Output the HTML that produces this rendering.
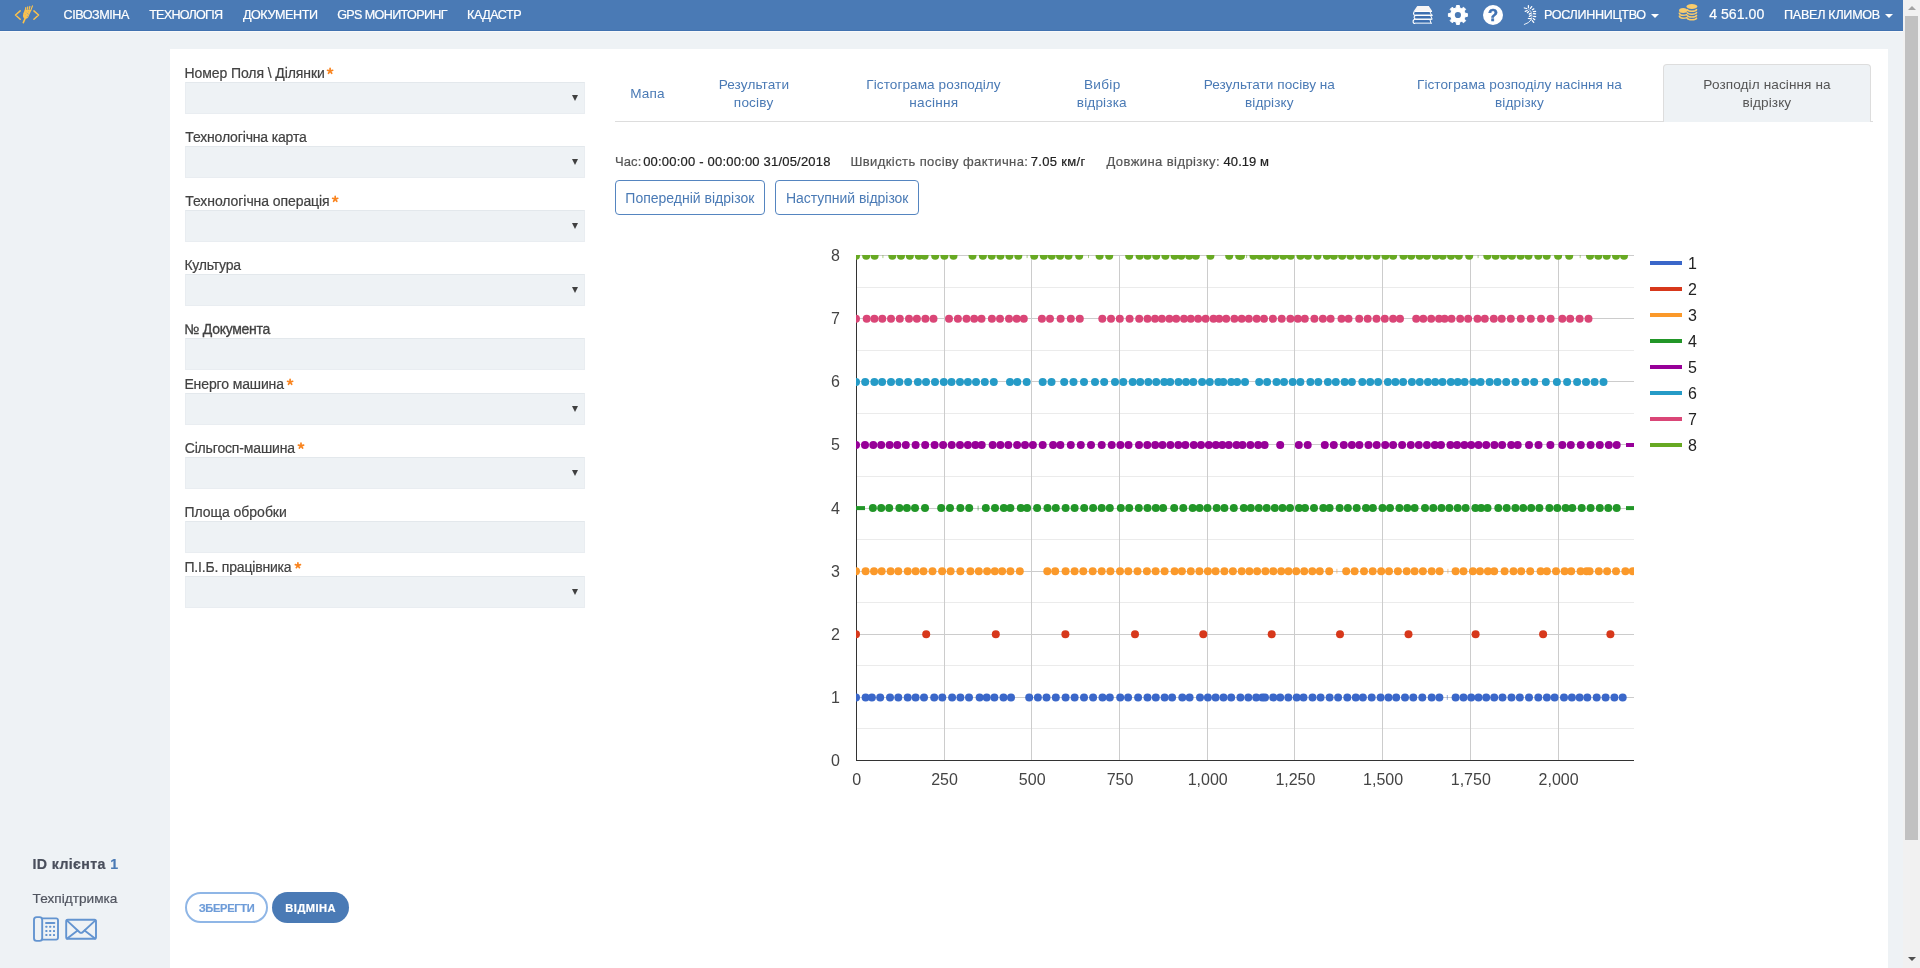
<!DOCTYPE html>
<html lang="uk">
<head>
<meta charset="utf-8">
<title>Розподіл насіння на відрізку</title>
<style>
*{box-sizing:border-box;}
html,body{margin:0;padding:0;width:1920px;height:968px;overflow:hidden;}
body{background:#eef2f5;font-family:"Liberation Sans",sans-serif;color:#333;position:relative;}
#root{position:absolute;left:0;top:0;width:1920px;height:968px;will-change:transform;}
.tx{position:absolute;white-space:pre;margin:0;padding:0;-webkit-text-stroke:0.2px;}
.ab{position:absolute;}
#nav{position:absolute;left:0;top:0;width:1903px;height:32px;background:#4a7ab5;border-bottom:1px solid #f8f9fa;box-shadow:inset 0 -1px 0 #4172b0;}
#sb{position:absolute;left:1903px;top:0;width:17px;height:968px;background:#f1f1f1;}
#sb .th{position:absolute;left:2px;top:16px;width:13px;height:824px;background:#c1c1c1;}
#sb .au{position:absolute;left:4.5px;top:5.5px;border-left:4px solid transparent;border-right:4px solid transparent;border-bottom:4.5px solid #a3a3a3;}
#sb .ad{position:absolute;left:4.5px;top:956.5px;border-left:4px solid transparent;border-right:4px solid transparent;border-top:4.5px solid #505050;}
#panel{position:absolute;left:170px;top:49px;width:1718px;height:919px;background:#fff;}
.fld{position:absolute;left:185px;width:400px;height:32px;background:#eef2f5;border:1px solid #e9edf1;border-top-color:#e3e8ec;}
.fld.sel:after{content:"";position:absolute;right:6px;top:11.7px;border-left:3px solid transparent;border-right:3px solid transparent;border-top:6px solid #404040;}
#tabline{position:absolute;left:615px;top:121px;width:1258px;height:1px;background:#ddd;}
#tabact{position:absolute;left:1663px;top:64px;width:208px;height:58px;background:#eef2f5;border:1px solid #ddd;border-bottom:none;border-radius:4px 4px 0 0;}
.btn{position:absolute;top:180px;height:35px;border:1px solid #5585c0;border-radius:4px;background:#fff;}
.caret{position:absolute;top:14px;width:0;height:0;border-left:4px solid transparent;border-right:4px solid transparent;border-top:4px solid #fff;}

</style>
</head>
<body>
<div id="root">
<div id="nav"></div>
<svg class="ab" style="left:0;top:0" width="1903" height="30" viewBox="0 0 1903 30">
<g fill="none" stroke="#fbc24d" stroke-width="1.5" stroke-linecap="round" stroke-linejoin="round">
<path d="M20.2 10.9L15.5 15L20.2 19.2M33.9 10.9L38.6 15L33.9 19.2"/>
<path d="M23.3 22.6L25.6 17.4" stroke-width="1.6"/>
<path d="M25.2 10.6L25.9 7.2M27 10.4L27.9 6.5M28.9 10.4L30 6M30.7 10.6L32.6 5.5" stroke-width="1.15" stroke-linecap="butt"/>
</g>
<path d="M24.7 10L23.3 13.4Q22.3 16.2 23.7 18.3Q26.4 19.6 28.3 17.2L30.7 11.8L31.3 10Z" fill="#fbc24d"/>
<g fill="#7f9ab5"><circle cx="27.6" cy="13.6" r=".5"/><circle cx="28.6" cy="14.8" r=".45"/><circle cx="27.3" cy="16.2" r=".5"/><circle cx="25.2" cy="14.8" r=".4"/><circle cx="26.1" cy="12.2" r=".4"/><circle cx="28.6" cy="11.8" r=".4"/></g>
<!-- books -->
<path d="M1417.3 5.9H1428.8L1432.3 11.3H1413.6Z" fill="#f7f5f5"/>
<g fill="none" stroke="#fff" stroke-width="1.1" stroke-linejoin="round">
<path d="M1432 11.5H1415.4a1.9 1.9 0 0 0 0 3.8H1432.6"/>
<path d="M1432.4 15.4H1416a1.9 1.9 0 0 0 0 3.8H1432.4"/>
<path d="M1431.6 19.3H1415.2a2.1 2.1 0 0 0 0 4.2H1431.8"/>
</g>
<path d="M1414.8 22.6H1431.8V23.9H1415.3Z" fill="#b7cbe3"/>
<g fill="#3a6db0"><rect x="1415.2" y="12.3" width="14.6" height="1.5"/><rect x="1416.2" y="16.4" width="14.6" height="1.5"/><rect x="1414.9" y="20.4" width="14.8" height="1.5"/></g>
<path d="M1430 11.8L1431.6 15.2M1430.8 15.9L1432 19M1430 19.8L1431 23.4" stroke="#fff" stroke-width="1" fill="none"/>
<!-- gear -->
<path d="M1456.21 7.79 L1456.47 5.51 L1459.33 5.51 L1459.59 7.79 L1461.80 8.71 L1463.60 7.27 L1465.63 9.30 L1464.19 11.10 L1465.11 13.31 L1467.39 13.57 L1467.39 16.43 L1465.11 16.69 L1464.19 18.90 L1465.63 20.70 L1463.60 22.73 L1461.80 21.29 L1459.59 22.21 L1459.33 24.49 L1456.47 24.49 L1456.21 22.21 L1454.00 21.29 L1452.20 22.73 L1450.17 20.70 L1451.61 18.90 L1450.69 16.69 L1448.41 16.43 L1448.41 13.57 L1450.69 13.31 L1451.61 11.10 L1450.17 9.30 L1452.20 7.27 L1454.00 8.71Z" fill="#fff" stroke="#fff" stroke-width="1" stroke-linejoin="round"/>
<circle cx="1457.9" cy="15" r="3.1" fill="#4a7ab5"/>
<!-- help -->
<circle cx="1493" cy="15" r="10" fill="#fff"/>
<text x="1493" y="20.7" text-anchor="middle" font-family="Liberation Sans, sans-serif" font-weight="700" font-size="16.5" fill="#3f72b3" stroke="#3f72b3" stroke-width=".5">?</text>
<!-- plant -->
<path d="M1524.3 24.5Q1529 23.2 1531.15 19.85" stroke="#fff" stroke-opacity=".92" stroke-width=".95" fill="none" stroke-linecap="round"/>
<path d="M1531.15 19.85Q1532.6 16.5 1531.6 12.9Q1530.8 10.2 1528.6 9.3" stroke="#fff" stroke-opacity=".8" stroke-width=".8" fill="none" stroke-linecap="round"/>
<path d="M1528.43 5.50L1528.43 7.70M1530.40 8.40L1531.70 6.60M1524.30 8.00L1526.70 8.50M1532.30 9.80L1533.80 8.90M1525.20 11.30L1527.20 10.50M1527.40 12.70L1528.70 11.60M1533.40 11.65L1535.60 11.45M1529.30 14.10L1530.50 13.40M1533.60 13.67L1535.60 13.77M1529.40 16.35L1530.90 15.50M1533.70 16.40L1535.70 16.56M1528.40 18.50L1530.70 18.60M1533.20 18.55L1534.80 19.70M1532.30 20.60L1533.70 22.45" stroke="#fff" stroke-width="1.25" fill="none" stroke-linecap="round"/>
<!-- coins -->
<g fill="#f9cc6c"><ellipse cx="1683.1" cy="10.5" rx="4.1" ry="2.5"/><ellipse cx="1691.9" cy="6.5" rx="5.4" ry="2.5"/></g>
<g fill="none" stroke="#f9cc6c" stroke-width="1.5" stroke-linecap="round">
<path d="M1679.3 13.2Q1680 15.2 1683 15.3Q1685.5 15.3 1686.6 14.6M1679.3 16.1Q1680 18.2 1683 18.3Q1685.5 18.3 1686.8 17.6"/>
<path d="M1687.2 9.6Q1688 11.2 1691.9 11.3Q1695.8 11.2 1696.6 9.6M1687.2 12.5Q1688 14.1 1691.9 14.2Q1695.8 14.1 1696.6 12.5M1687.2 15.3Q1688 16.9 1691.9 17Q1695.8 16.9 1696.6 15.3M1687.2 18.1Q1688 19.7 1691.9 19.8Q1695.8 19.7 1696.6 18.1"/>
</g>
</svg>
<div class="caret" style="left:1651px"></div>
<div class="caret" style="left:1885px"></div>
<div id="sb"><div class="au"></div><div class="th"></div><div class="ad"></div></div>
<div id="panel"></div>
<div class="fld sel" style="top:82px"></div>
<div class="fld sel" style="top:146px"></div>
<div class="fld sel" style="top:210px"></div>
<div class="fld sel" style="top:274px"></div>
<div class="fld" style="top:338px"></div>
<div class="fld sel" style="top:393px"></div>
<div class="fld sel" style="top:457px"></div>
<div class="fld" style="top:521px"></div>
<div class="fld sel" style="top:576px"></div>
<svg class="ab" style="left:280px;top:60px" width="70" height="520" viewBox="280 60 70 520"><path d="M330.1 71.1L330.10 68.40M330.1 71.1L332.67 70.27M330.1 71.1L331.69 73.28M330.1 71.1L328.51 73.28M330.1 71.1L327.53 70.27M335.2 199.1L335.20 196.40M335.2 199.1L337.77 198.27M335.2 199.1L336.79 201.28M335.2 199.1L333.61 201.28M335.2 199.1L332.63 198.27M290.1 382.1L290.10 379.40M290.1 382.1L292.67 381.27M290.1 382.1L291.69 384.28M290.1 382.1L288.51 384.28M290.1 382.1L287.53 381.27M301.0 445.9L301.00 443.20M301.0 445.9L303.57 445.07M301.0 445.9L302.59 448.08M301.0 445.9L299.41 448.08M301.0 445.9L298.43 445.07M297.9 565.5L297.90 562.80M297.9 565.5L300.47 564.67M297.9 565.5L299.49 567.68M297.9 565.5L296.31 567.68M297.9 565.5L295.33 564.67" fill="none" stroke="#f9841f" stroke-width="1.7" stroke-linecap="round"/></svg>
<div id="tabline"></div>
<div id="tabact"></div>
<div class="btn" style="left:615px;width:150px"></div>
<div class="btn" style="left:775px;width:144px"></div>
<svg id="chart" width="1110" height="560" viewBox="615 240 1110 560" style="position:absolute;left:615px;top:240px;font-family:'Liberation Sans',sans-serif">
<defs><clipPath id="cp"><rect x="856" y="255" width="778" height="506"/></clipPath></defs>
<rect x="856" y="728" width="778" height="1" fill="#ebebeb"/>
<rect x="856" y="665" width="778" height="1" fill="#ebebeb"/>
<rect x="856" y="602" width="778" height="1" fill="#ebebeb"/>
<rect x="856" y="539" width="778" height="1" fill="#ebebeb"/>
<rect x="856" y="476" width="778" height="1" fill="#ebebeb"/>
<rect x="856" y="413" width="778" height="1" fill="#ebebeb"/>
<rect x="856" y="350" width="778" height="1" fill="#ebebeb"/>
<rect x="856" y="287" width="778" height="1" fill="#ebebeb"/>
<rect x="944" y="255" width="1" height="506" fill="#ccc"/>
<rect x="1031" y="255" width="1" height="506" fill="#ccc"/>
<rect x="1119" y="255" width="1" height="506" fill="#ccc"/>
<rect x="1207" y="255" width="1" height="506" fill="#ccc"/>
<rect x="1294" y="255" width="1" height="506" fill="#ccc"/>
<rect x="1382" y="255" width="1" height="506" fill="#ccc"/>
<rect x="1470" y="255" width="1" height="506" fill="#ccc"/>
<rect x="1558" y="255" width="1" height="506" fill="#ccc"/>
<rect x="856" y="697" width="778" height="1" fill="#ccc"/>
<rect x="856" y="634" width="778" height="1" fill="#ccc"/>
<rect x="856" y="571" width="778" height="1" fill="#ccc"/>
<rect x="856" y="508" width="778" height="1" fill="#ccc"/>
<rect x="856" y="444" width="778" height="1" fill="#ccc"/>
<rect x="856" y="381" width="778" height="1" fill="#ccc"/>
<rect x="856" y="318" width="778" height="1" fill="#ccc"/>
<rect x="856" y="255" width="778" height="1" fill="#ccc"/>
<rect x="856" y="255" width="1" height="506" fill="#333"/>
<rect x="856" y="760" width="778" height="1" fill="#333"/>
<g clip-path="url(#cp)">
<g fill="#3a67c9" stroke="none">
<rect x="1446.8" y="695.0" width="1" height="4.8" opacity="0.55"/>
<circle cx="856.0" cy="697.4" r="4"/><circle cx="865.6" cy="697.4" r="4"/><circle cx="871.9" cy="697.4" r="4"/><circle cx="880.2" cy="697.4" r="4"/><circle cx="890.0" cy="697.4" r="4"/><circle cx="898.3" cy="697.4" r="4"/><circle cx="907.7" cy="697.4" r="4"/><circle cx="915.6" cy="697.4" r="4"/><circle cx="924.0" cy="697.4" r="4"/><circle cx="934.2" cy="697.4" r="4"/><circle cx="942.3" cy="697.4" r="4"/><circle cx="952.1" cy="697.4" r="4"/><circle cx="960.4" cy="697.4" r="4"/><circle cx="969.0" cy="697.4" r="4"/><circle cx="979.6" cy="697.4" r="4"/><circle cx="986.7" cy="697.4" r="4"/><circle cx="994.4" cy="697.4" r="4"/><circle cx="1003.5" cy="697.4" r="4"/><circle cx="1011.0" cy="697.4" r="4"/><circle cx="1029.2" cy="697.4" r="4"/><circle cx="1037.9" cy="697.4" r="4"/><circle cx="1046.5" cy="697.4" r="4"/><circle cx="1055.8" cy="697.4" r="4"/><circle cx="1065.6" cy="697.4" r="4"/><circle cx="1074.6" cy="697.4" r="4"/><circle cx="1084.0" cy="697.4" r="4"/><circle cx="1093.1" cy="697.4" r="4"/><circle cx="1102.5" cy="697.4" r="4"/><circle cx="1109.8" cy="697.4" r="4"/><circle cx="1120.2" cy="697.4" r="4"/><circle cx="1128.1" cy="697.4" r="4"/><circle cx="1138.1" cy="697.4" r="4"/><circle cx="1147.5" cy="697.4" r="4"/><circle cx="1155.8" cy="697.4" r="4"/><circle cx="1164.6" cy="697.4" r="4"/><circle cx="1172.1" cy="697.4" r="4"/><circle cx="1182.3" cy="697.4" r="4"/><circle cx="1189.6" cy="697.4" r="4"/><circle cx="1200.0" cy="697.4" r="4"/><circle cx="1207.9" cy="697.4" r="4"/><circle cx="1215.6" cy="697.4" r="4"/><circle cx="1223.5" cy="697.4" r="4"/><circle cx="1231.2" cy="697.4" r="4"/><circle cx="1240.4" cy="697.4" r="4"/><circle cx="1248.3" cy="697.4" r="4"/><circle cx="1256.2" cy="697.4" r="4"/><circle cx="1262.3" cy="697.4" r="4"/><circle cx="1265.0" cy="697.4" r="4"/><circle cx="1273.3" cy="697.4" r="4"/><circle cx="1280.2" cy="697.4" r="4"/><circle cx="1288.3" cy="697.4" r="4"/><circle cx="1296.7" cy="697.4" r="4"/><circle cx="1303.5" cy="697.4" r="4"/><circle cx="1312.5" cy="697.4" r="4"/><circle cx="1320.6" cy="697.4" r="4"/><circle cx="1329.6" cy="697.4" r="4"/><circle cx="1338.1" cy="697.4" r="4"/><circle cx="1347.3" cy="697.4" r="4"/><circle cx="1355.8" cy="697.4" r="4"/><circle cx="1362.9" cy="697.4" r="4"/><circle cx="1371.7" cy="697.4" r="4"/><circle cx="1380.6" cy="697.4" r="4"/><circle cx="1388.5" cy="697.4" r="4"/><circle cx="1396.2" cy="697.4" r="4"/><circle cx="1405.0" cy="697.4" r="4"/><circle cx="1413.3" cy="697.4" r="4"/><circle cx="1422.3" cy="697.4" r="4"/><circle cx="1431.7" cy="697.4" r="4"/><circle cx="1439.4" cy="697.4" r="4"/><circle cx="1455.6" cy="697.4" r="4"/><circle cx="1463.5" cy="697.4" r="4"/><circle cx="1471.2" cy="697.4" r="4"/><circle cx="1478.5" cy="697.4" r="4"/><circle cx="1486.2" cy="697.4" r="4"/><circle cx="1494.2" cy="697.4" r="4"/><circle cx="1502.5" cy="697.4" r="4"/><circle cx="1511.5" cy="697.4" r="4"/><circle cx="1519.8" cy="697.4" r="4"/><circle cx="1529.0" cy="697.4" r="4"/><circle cx="1538.3" cy="697.4" r="4"/><circle cx="1546.9" cy="697.4" r="4"/><circle cx="1554.6" cy="697.4" r="4"/><circle cx="1564.0" cy="697.4" r="4"/><circle cx="1571.9" cy="697.4" r="4"/><circle cx="1579.6" cy="697.4" r="4"/><circle cx="1587.3" cy="697.4" r="4"/><circle cx="1596.7" cy="697.4" r="4"/><circle cx="1605.6" cy="697.4" r="4"/><circle cx="1614.4" cy="697.4" r="4"/><circle cx="1622.7" cy="697.4" r="4"/>
</g>
<g fill="#d7381b" stroke="none">
<circle cx="856.0" cy="634.3" r="4"/><circle cx="926.2" cy="634.3" r="4"/><circle cx="995.8" cy="634.3" r="4"/><circle cx="1065.4" cy="634.3" r="4"/><circle cx="1135.0" cy="634.3" r="4"/><circle cx="1203.3" cy="634.3" r="4"/><circle cx="1271.7" cy="634.3" r="4"/><circle cx="1340.0" cy="634.3" r="4"/><circle cx="1408.5" cy="634.3" r="4"/><circle cx="1475.6" cy="634.3" r="4"/><circle cx="1543.1" cy="634.3" r="4"/><circle cx="1610.4" cy="634.3" r="4"/>
</g>
<g fill="#fb992a" stroke="none">
<rect x="1336.4" y="568.8" width="1" height="4.8" opacity="0.55"/>
<rect x="1447.4" y="568.8" width="1" height="4.8" opacity="0.55"/>
<circle cx="856.0" cy="571.2" r="4"/><circle cx="865.6" cy="571.2" r="4"/><circle cx="874.0" cy="571.2" r="4"/><circle cx="881.7" cy="571.2" r="4"/><circle cx="890.6" cy="571.2" r="4"/><circle cx="898.3" cy="571.2" r="4"/><circle cx="907.7" cy="571.2" r="4"/><circle cx="915.6" cy="571.2" r="4"/><circle cx="923.5" cy="571.2" r="4"/><circle cx="932.5" cy="571.2" r="4"/><circle cx="942.1" cy="571.2" r="4"/><circle cx="950.6" cy="571.2" r="4"/><circle cx="960.4" cy="571.2" r="4"/><circle cx="970.4" cy="571.2" r="4"/><circle cx="978.8" cy="571.2" r="4"/><circle cx="987.1" cy="571.2" r="4"/><circle cx="994.8" cy="571.2" r="4"/><circle cx="1002.1" cy="571.2" r="4"/><circle cx="1010.4" cy="571.2" r="4"/><circle cx="1019.8" cy="571.2" r="4"/><circle cx="1047.3" cy="571.2" r="4"/><circle cx="1055.2" cy="571.2" r="4"/><circle cx="1065.6" cy="571.2" r="4"/><circle cx="1074.6" cy="571.2" r="4"/><circle cx="1083.3" cy="571.2" r="4"/><circle cx="1092.7" cy="571.2" r="4"/><circle cx="1101.7" cy="571.2" r="4"/><circle cx="1110.4" cy="571.2" r="4"/><circle cx="1120.0" cy="571.2" r="4"/><circle cx="1128.3" cy="571.2" r="4"/><circle cx="1137.5" cy="571.2" r="4"/><circle cx="1146.9" cy="571.2" r="4"/><circle cx="1155.6" cy="571.2" r="4"/><circle cx="1164.6" cy="571.2" r="4"/><circle cx="1174.6" cy="571.2" r="4"/><circle cx="1181.9" cy="571.2" r="4"/><circle cx="1190.8" cy="571.2" r="4"/><circle cx="1199.4" cy="571.2" r="4"/><circle cx="1207.9" cy="571.2" r="4"/><circle cx="1215.6" cy="571.2" r="4"/><circle cx="1224.4" cy="571.2" r="4"/><circle cx="1232.9" cy="571.2" r="4"/><circle cx="1241.7" cy="571.2" r="4"/><circle cx="1249.4" cy="571.2" r="4"/><circle cx="1257.1" cy="571.2" r="4"/><circle cx="1265.4" cy="571.2" r="4"/><circle cx="1273.3" cy="571.2" r="4"/><circle cx="1281.2" cy="571.2" r="4"/><circle cx="1288.5" cy="571.2" r="4"/><circle cx="1296.2" cy="571.2" r="4"/><circle cx="1304.2" cy="571.2" r="4"/><circle cx="1312.3" cy="571.2" r="4"/><circle cx="1319.8" cy="571.2" r="4"/><circle cx="1329.2" cy="571.2" r="4"/><circle cx="1346.2" cy="571.2" r="4"/><circle cx="1354.6" cy="571.2" r="4"/><circle cx="1364.0" cy="571.2" r="4"/><circle cx="1372.7" cy="571.2" r="4"/><circle cx="1381.2" cy="571.2" r="4"/><circle cx="1389.0" cy="571.2" r="4"/><circle cx="1397.9" cy="571.2" r="4"/><circle cx="1406.7" cy="571.2" r="4"/><circle cx="1414.6" cy="571.2" r="4"/><circle cx="1422.9" cy="571.2" r="4"/><circle cx="1431.7" cy="571.2" r="4"/><circle cx="1439.6" cy="571.2" r="4"/><circle cx="1455.6" cy="571.2" r="4"/><circle cx="1463.5" cy="571.2" r="4"/><circle cx="1472.9" cy="571.2" r="4"/><circle cx="1480.0" cy="571.2" r="4"/><circle cx="1487.9" cy="571.2" r="4"/><circle cx="1494.2" cy="571.2" r="4"/><circle cx="1504.6" cy="571.2" r="4"/><circle cx="1513.5" cy="571.2" r="4"/><circle cx="1521.2" cy="571.2" r="4"/><circle cx="1530.2" cy="571.2" r="4"/><circle cx="1540.6" cy="571.2" r="4"/><circle cx="1546.9" cy="571.2" r="4"/><circle cx="1556.0" cy="571.2" r="4"/><circle cx="1564.6" cy="571.2" r="4"/><circle cx="1571.2" cy="571.2" r="4"/><circle cx="1580.6" cy="571.2" r="4"/><circle cx="1586.5" cy="571.2" r="4"/><circle cx="1589.6" cy="571.2" r="4"/><circle cx="1598.8" cy="571.2" r="4"/><circle cx="1607.1" cy="571.2" r="4"/><circle cx="1616.0" cy="571.2" r="4"/><circle cx="1625.4" cy="571.2" r="4"/><circle cx="1632.7" cy="571.2" r="4"/>
</g>
<g fill="#229628" stroke="none">
<rect x="856" y="506.1" width="9" height="4"/>
<rect x="1626" y="506.1" width="8" height="4"/>
<rect x="977.6" y="505.7" width="1" height="4.8" opacity="0.55"/>
<circle cx="872.9" cy="508.1" r="4"/><circle cx="881.2" cy="508.1" r="4"/><circle cx="889.2" cy="508.1" r="4"/><circle cx="899.4" cy="508.1" r="4"/><circle cx="906.9" cy="508.1" r="4"/><circle cx="915.0" cy="508.1" r="4"/><circle cx="925.0" cy="508.1" r="4"/><circle cx="941.2" cy="508.1" r="4"/><circle cx="950.0" cy="508.1" r="4"/><circle cx="960.4" cy="508.1" r="4"/><circle cx="969.2" cy="508.1" r="4"/><circle cx="985.8" cy="508.1" r="4"/><circle cx="995.0" cy="508.1" r="4"/><circle cx="1003.8" cy="508.1" r="4"/><circle cx="1010.4" cy="508.1" r="4"/><circle cx="1020.8" cy="508.1" r="4"/><circle cx="1027.1" cy="508.1" r="4"/><circle cx="1037.1" cy="508.1" r="4"/><circle cx="1047.5" cy="508.1" r="4"/><circle cx="1055.8" cy="508.1" r="4"/><circle cx="1065.6" cy="508.1" r="4"/><circle cx="1074.6" cy="508.1" r="4"/><circle cx="1084.2" cy="508.1" r="4"/><circle cx="1093.1" cy="508.1" r="4"/><circle cx="1101.7" cy="508.1" r="4"/><circle cx="1109.8" cy="508.1" r="4"/><circle cx="1120.8" cy="508.1" r="4"/><circle cx="1129.2" cy="508.1" r="4"/><circle cx="1138.8" cy="508.1" r="4"/><circle cx="1147.5" cy="508.1" r="4"/><circle cx="1155.8" cy="508.1" r="4"/><circle cx="1163.1" cy="508.1" r="4"/><circle cx="1174.2" cy="508.1" r="4"/><circle cx="1183.3" cy="508.1" r="4"/><circle cx="1192.7" cy="508.1" r="4"/><circle cx="1199.6" cy="508.1" r="4"/><circle cx="1207.5" cy="508.1" r="4"/><circle cx="1216.7" cy="508.1" r="4"/><circle cx="1224.4" cy="508.1" r="4"/><circle cx="1233.8" cy="508.1" r="4"/><circle cx="1243.8" cy="508.1" r="4"/><circle cx="1250.8" cy="508.1" r="4"/><circle cx="1258.8" cy="508.1" r="4"/><circle cx="1266.7" cy="508.1" r="4"/><circle cx="1274.8" cy="508.1" r="4"/><circle cx="1282.5" cy="508.1" r="4"/><circle cx="1290.0" cy="508.1" r="4"/><circle cx="1299.0" cy="508.1" r="4"/><circle cx="1305.0" cy="508.1" r="4"/><circle cx="1314.0" cy="508.1" r="4"/><circle cx="1323.3" cy="508.1" r="4"/><circle cx="1329.6" cy="508.1" r="4"/><circle cx="1339.6" cy="508.1" r="4"/><circle cx="1347.9" cy="508.1" r="4"/><circle cx="1356.7" cy="508.1" r="4"/><circle cx="1366.0" cy="508.1" r="4"/><circle cx="1372.9" cy="508.1" r="4"/><circle cx="1382.5" cy="508.1" r="4"/><circle cx="1390.0" cy="508.1" r="4"/><circle cx="1399.4" cy="508.1" r="4"/><circle cx="1407.3" cy="508.1" r="4"/><circle cx="1414.6" cy="508.1" r="4"/><circle cx="1425.0" cy="508.1" r="4"/><circle cx="1433.3" cy="508.1" r="4"/><circle cx="1441.5" cy="508.1" r="4"/><circle cx="1449.4" cy="508.1" r="4"/><circle cx="1457.7" cy="508.1" r="4"/><circle cx="1465.6" cy="508.1" r="4"/><circle cx="1475.4" cy="508.1" r="4"/><circle cx="1481.2" cy="508.1" r="4"/><circle cx="1487.5" cy="508.1" r="4"/><circle cx="1498.3" cy="508.1" r="4"/><circle cx="1506.7" cy="508.1" r="4"/><circle cx="1515.4" cy="508.1" r="4"/><circle cx="1523.3" cy="508.1" r="4"/><circle cx="1531.2" cy="508.1" r="4"/><circle cx="1539.4" cy="508.1" r="4"/><circle cx="1549.4" cy="508.1" r="4"/><circle cx="1557.3" cy="508.1" r="4"/><circle cx="1565.6" cy="508.1" r="4"/><circle cx="1572.3" cy="508.1" r="4"/><circle cx="1581.7" cy="508.1" r="4"/><circle cx="1590.6" cy="508.1" r="4"/><circle cx="1599.8" cy="508.1" r="4"/><circle cx="1608.3" cy="508.1" r="4"/><circle cx="1616.7" cy="508.1" r="4"/>
</g>
<g fill="#970098" stroke="none">
<rect x="1626" y="443.0" width="8" height="4"/>
<circle cx="856.0" cy="445.0" r="4"/><circle cx="865.0" cy="445.0" r="4"/><circle cx="873.3" cy="445.0" r="4"/><circle cx="881.2" cy="445.0" r="4"/><circle cx="889.6" cy="445.0" r="4"/><circle cx="897.3" cy="445.0" r="4"/><circle cx="905.8" cy="445.0" r="4"/><circle cx="915.6" cy="445.0" r="4"/><circle cx="925.2" cy="445.0" r="4"/><circle cx="934.6" cy="445.0" r="4"/><circle cx="943.1" cy="445.0" r="4"/><circle cx="951.7" cy="445.0" r="4"/><circle cx="960.0" cy="445.0" r="4"/><circle cx="967.9" cy="445.0" r="4"/><circle cx="975.4" cy="445.0" r="4"/><circle cx="981.7" cy="445.0" r="4"/><circle cx="992.7" cy="445.0" r="4"/><circle cx="1000.4" cy="445.0" r="4"/><circle cx="1008.3" cy="445.0" r="4"/><circle cx="1017.1" cy="445.0" r="4"/><circle cx="1025.0" cy="445.0" r="4"/><circle cx="1032.9" cy="445.0" r="4"/><circle cx="1042.7" cy="445.0" r="4"/><circle cx="1053.1" cy="445.0" r="4"/><circle cx="1060.4" cy="445.0" r="4"/><circle cx="1070.8" cy="445.0" r="4"/><circle cx="1080.8" cy="445.0" r="4"/><circle cx="1091.0" cy="445.0" r="4"/><circle cx="1101.7" cy="445.0" r="4"/><circle cx="1111.7" cy="445.0" r="4"/><circle cx="1120.4" cy="445.0" r="4"/><circle cx="1128.5" cy="445.0" r="4"/><circle cx="1139.0" cy="445.0" r="4"/><circle cx="1147.3" cy="445.0" r="4"/><circle cx="1155.2" cy="445.0" r="4"/><circle cx="1162.5" cy="445.0" r="4"/><circle cx="1170.4" cy="445.0" r="4"/><circle cx="1178.3" cy="445.0" r="4"/><circle cx="1185.4" cy="445.0" r="4"/><circle cx="1193.8" cy="445.0" r="4"/><circle cx="1201.0" cy="445.0" r="4"/><circle cx="1208.8" cy="445.0" r="4"/><circle cx="1215.8" cy="445.0" r="4"/><circle cx="1222.3" cy="445.0" r="4"/><circle cx="1228.8" cy="445.0" r="4"/><circle cx="1236.5" cy="445.0" r="4"/><circle cx="1242.5" cy="445.0" r="4"/><circle cx="1250.4" cy="445.0" r="4"/><circle cx="1258.1" cy="445.0" r="4"/><circle cx="1264.6" cy="445.0" r="4"/><circle cx="1280.2" cy="445.0" r="4"/><circle cx="1298.8" cy="445.0" r="4"/><circle cx="1307.7" cy="445.0" r="4"/><circle cx="1324.8" cy="445.0" r="4"/><circle cx="1333.8" cy="445.0" r="4"/><circle cx="1343.8" cy="445.0" r="4"/><circle cx="1351.9" cy="445.0" r="4"/><circle cx="1359.4" cy="445.0" r="4"/><circle cx="1368.5" cy="445.0" r="4"/><circle cx="1376.7" cy="445.0" r="4"/><circle cx="1385.2" cy="445.0" r="4"/><circle cx="1393.1" cy="445.0" r="4"/><circle cx="1402.1" cy="445.0" r="4"/><circle cx="1410.8" cy="445.0" r="4"/><circle cx="1418.8" cy="445.0" r="4"/><circle cx="1426.9" cy="445.0" r="4"/><circle cx="1434.8" cy="445.0" r="4"/><circle cx="1441.0" cy="445.0" r="4"/><circle cx="1450.4" cy="445.0" r="4"/><circle cx="1457.1" cy="445.0" r="4"/><circle cx="1464.4" cy="445.0" r="4"/><circle cx="1471.2" cy="445.0" r="4"/><circle cx="1478.5" cy="445.0" r="4"/><circle cx="1486.2" cy="445.0" r="4"/><circle cx="1494.4" cy="445.0" r="4"/><circle cx="1502.1" cy="445.0" r="4"/><circle cx="1511.2" cy="445.0" r="4"/><circle cx="1517.7" cy="445.0" r="4"/><circle cx="1529.0" cy="445.0" r="4"/><circle cx="1538.5" cy="445.0" r="4"/><circle cx="1550.4" cy="445.0" r="4"/><circle cx="1562.3" cy="445.0" r="4"/><circle cx="1570.8" cy="445.0" r="4"/><circle cx="1580.8" cy="445.0" r="4"/><circle cx="1590.6" cy="445.0" r="4"/><circle cx="1599.8" cy="445.0" r="4"/><circle cx="1608.8" cy="445.0" r="4"/><circle cx="1616.7" cy="445.0" r="4"/>
</g>
<g fill="#259bc7" stroke="none">
<circle cx="856.0" cy="381.9" r="4"/><circle cx="865.2" cy="381.9" r="4"/><circle cx="874.4" cy="381.9" r="4"/><circle cx="882.1" cy="381.9" r="4"/><circle cx="891.0" cy="381.9" r="4"/><circle cx="899.4" cy="381.9" r="4"/><circle cx="908.1" cy="381.9" r="4"/><circle cx="917.9" cy="381.9" r="4"/><circle cx="926.0" cy="381.9" r="4"/><circle cx="935.0" cy="381.9" r="4"/><circle cx="943.8" cy="381.9" r="4"/><circle cx="951.5" cy="381.9" r="4"/><circle cx="960.0" cy="381.9" r="4"/><circle cx="967.9" cy="381.9" r="4"/><circle cx="976.0" cy="381.9" r="4"/><circle cx="984.8" cy="381.9" r="4"/><circle cx="993.8" cy="381.9" r="4"/><circle cx="1010.0" cy="381.9" r="4"/><circle cx="1017.3" cy="381.9" r="4"/><circle cx="1026.7" cy="381.9" r="4"/><circle cx="1042.7" cy="381.9" r="4"/><circle cx="1051.5" cy="381.9" r="4"/><circle cx="1064.2" cy="381.9" r="4"/><circle cx="1073.5" cy="381.9" r="4"/><circle cx="1084.0" cy="381.9" r="4"/><circle cx="1095.0" cy="381.9" r="4"/><circle cx="1104.2" cy="381.9" r="4"/><circle cx="1115.0" cy="381.9" r="4"/><circle cx="1123.3" cy="381.9" r="4"/><circle cx="1132.7" cy="381.9" r="4"/><circle cx="1140.2" cy="381.9" r="4"/><circle cx="1148.3" cy="381.9" r="4"/><circle cx="1156.2" cy="381.9" r="4"/><circle cx="1164.2" cy="381.9" r="4"/><circle cx="1170.2" cy="381.9" r="4"/><circle cx="1178.5" cy="381.9" r="4"/><circle cx="1186.0" cy="381.9" r="4"/><circle cx="1193.3" cy="381.9" r="4"/><circle cx="1202.1" cy="381.9" r="4"/><circle cx="1209.8" cy="381.9" r="4"/><circle cx="1218.3" cy="381.9" r="4"/><circle cx="1223.3" cy="381.9" r="4"/><circle cx="1231.2" cy="381.9" r="4"/><circle cx="1237.1" cy="381.9" r="4"/><circle cx="1245.0" cy="381.9" r="4"/><circle cx="1259.2" cy="381.9" r="4"/><circle cx="1267.1" cy="381.9" r="4"/><circle cx="1276.5" cy="381.9" r="4"/><circle cx="1284.0" cy="381.9" r="4"/><circle cx="1292.7" cy="381.9" r="4"/><circle cx="1300.4" cy="381.9" r="4"/><circle cx="1310.4" cy="381.9" r="4"/><circle cx="1318.3" cy="381.9" r="4"/><circle cx="1327.9" cy="381.9" r="4"/><circle cx="1335.8" cy="381.9" r="4"/><circle cx="1344.6" cy="381.9" r="4"/><circle cx="1351.9" cy="381.9" r="4"/><circle cx="1362.3" cy="381.9" r="4"/><circle cx="1370.2" cy="381.9" r="4"/><circle cx="1378.1" cy="381.9" r="4"/><circle cx="1387.9" cy="381.9" r="4"/><circle cx="1395.4" cy="381.9" r="4"/><circle cx="1403.1" cy="381.9" r="4"/><circle cx="1411.9" cy="381.9" r="4"/><circle cx="1419.8" cy="381.9" r="4"/><circle cx="1427.9" cy="381.9" r="4"/><circle cx="1435.2" cy="381.9" r="4"/><circle cx="1442.5" cy="381.9" r="4"/><circle cx="1450.8" cy="381.9" r="4"/><circle cx="1457.7" cy="381.9" r="4"/><circle cx="1464.6" cy="381.9" r="4"/><circle cx="1473.3" cy="381.9" r="4"/><circle cx="1480.6" cy="381.9" r="4"/><circle cx="1489.6" cy="381.9" r="4"/><circle cx="1497.5" cy="381.9" r="4"/><circle cx="1506.2" cy="381.9" r="4"/><circle cx="1515.4" cy="381.9" r="4"/><circle cx="1525.4" cy="381.9" r="4"/><circle cx="1534.2" cy="381.9" r="4"/><circle cx="1545.8" cy="381.9" r="4"/><circle cx="1556.9" cy="381.9" r="4"/><circle cx="1567.1" cy="381.9" r="4"/><circle cx="1577.1" cy="381.9" r="4"/><circle cx="1586.0" cy="381.9" r="4"/><circle cx="1594.6" cy="381.9" r="4"/><circle cx="1603.5" cy="381.9" r="4"/>
</g>
<g fill="#da4677" stroke="none">
<circle cx="856.0" cy="318.8" r="4"/><circle cx="866.7" cy="318.8" r="4"/><circle cx="874.4" cy="318.8" r="4"/><circle cx="882.3" cy="318.8" r="4"/><circle cx="891.0" cy="318.8" r="4"/><circle cx="899.8" cy="318.8" r="4"/><circle cx="909.0" cy="318.8" r="4"/><circle cx="916.9" cy="318.8" r="4"/><circle cx="925.4" cy="318.8" r="4"/><circle cx="933.5" cy="318.8" r="4"/><circle cx="949.0" cy="318.8" r="4"/><circle cx="957.9" cy="318.8" r="4"/><circle cx="966.5" cy="318.8" r="4"/><circle cx="974.2" cy="318.8" r="4"/><circle cx="981.5" cy="318.8" r="4"/><circle cx="991.9" cy="318.8" r="4"/><circle cx="1000.0" cy="318.8" r="4"/><circle cx="1009.0" cy="318.8" r="4"/><circle cx="1016.7" cy="318.8" r="4"/><circle cx="1023.8" cy="318.8" r="4"/><circle cx="1041.9" cy="318.8" r="4"/><circle cx="1050.0" cy="318.8" r="4"/><circle cx="1060.6" cy="318.8" r="4"/><circle cx="1070.8" cy="318.8" r="4"/><circle cx="1079.8" cy="318.8" r="4"/><circle cx="1102.3" cy="318.8" r="4"/><circle cx="1111.0" cy="318.8" r="4"/><circle cx="1119.8" cy="318.8" r="4"/><circle cx="1129.6" cy="318.8" r="4"/><circle cx="1139.2" cy="318.8" r="4"/><circle cx="1147.5" cy="318.8" r="4"/><circle cx="1155.0" cy="318.8" r="4"/><circle cx="1161.9" cy="318.8" r="4"/><circle cx="1169.4" cy="318.8" r="4"/><circle cx="1176.2" cy="318.8" r="4"/><circle cx="1184.0" cy="318.8" r="4"/><circle cx="1190.8" cy="318.8" r="4"/><circle cx="1198.1" cy="318.8" r="4"/><circle cx="1205.6" cy="318.8" r="4"/><circle cx="1213.5" cy="318.8" r="4"/><circle cx="1219.2" cy="318.8" r="4"/><circle cx="1226.2" cy="318.8" r="4"/><circle cx="1234.4" cy="318.8" r="4"/><circle cx="1241.7" cy="318.8" r="4"/><circle cx="1248.8" cy="318.8" r="4"/><circle cx="1256.7" cy="318.8" r="4"/><circle cx="1264.0" cy="318.8" r="4"/><circle cx="1272.9" cy="318.8" r="4"/><circle cx="1281.7" cy="318.8" r="4"/><circle cx="1290.4" cy="318.8" r="4"/><circle cx="1297.9" cy="318.8" r="4"/><circle cx="1304.8" cy="318.8" r="4"/><circle cx="1314.4" cy="318.8" r="4"/><circle cx="1322.9" cy="318.8" r="4"/><circle cx="1330.6" cy="318.8" r="4"/><circle cx="1341.5" cy="318.8" r="4"/><circle cx="1348.5" cy="318.8" r="4"/><circle cx="1359.2" cy="318.8" r="4"/><circle cx="1367.7" cy="318.8" r="4"/><circle cx="1376.5" cy="318.8" r="4"/><circle cx="1384.8" cy="318.8" r="4"/><circle cx="1393.1" cy="318.8" r="4"/><circle cx="1400.0" cy="318.8" r="4"/><circle cx="1416.2" cy="318.8" r="4"/><circle cx="1423.3" cy="318.8" r="4"/><circle cx="1431.2" cy="318.8" r="4"/><circle cx="1439.0" cy="318.8" r="4"/><circle cx="1444.6" cy="318.8" r="4"/><circle cx="1451.5" cy="318.8" r="4"/><circle cx="1460.2" cy="318.8" r="4"/><circle cx="1468.1" cy="318.8" r="4"/><circle cx="1477.5" cy="318.8" r="4"/><circle cx="1484.8" cy="318.8" r="4"/><circle cx="1493.8" cy="318.8" r="4"/><circle cx="1501.7" cy="318.8" r="4"/><circle cx="1510.8" cy="318.8" r="4"/><circle cx="1520.8" cy="318.8" r="4"/><circle cx="1530.8" cy="318.8" r="4"/><circle cx="1541.0" cy="318.8" r="4"/><circle cx="1550.6" cy="318.8" r="4"/><circle cx="1562.3" cy="318.8" r="4"/><circle cx="1570.2" cy="318.8" r="4"/><circle cx="1579.6" cy="318.8" r="4"/><circle cx="1588.5" cy="318.8" r="4"/>
</g>
<g fill="#67a922" stroke="none">
<rect x="882.4" y="253.3" width="1" height="4.8" opacity="0.55"/>
<rect x="1026.6" y="253.3" width="1" height="4.8" opacity="0.55"/>
<rect x="1088.0" y="253.3" width="1" height="4.8" opacity="0.55"/>
<rect x="1246.1" y="253.3" width="1" height="4.8" opacity="0.55"/>
<rect x="1477.6" y="253.3" width="1" height="4.8" opacity="0.55"/>
<rect x="1579.7" y="253.3" width="1" height="4.8" opacity="0.55"/>
<circle cx="856.0" cy="255.7" r="4"/><circle cx="866.2" cy="255.7" r="4"/><circle cx="874.6" cy="255.7" r="4"/><circle cx="892.3" cy="255.7" r="4"/><circle cx="901.0" cy="255.7" r="4"/><circle cx="909.8" cy="255.7" r="4"/><circle cx="918.8" cy="255.7" r="4"/><circle cx="924.6" cy="255.7" r="4"/><circle cx="935.2" cy="255.7" r="4"/><circle cx="944.4" cy="255.7" r="4"/><circle cx="953.5" cy="255.7" r="4"/><circle cx="972.5" cy="255.7" r="4"/><circle cx="982.9" cy="255.7" r="4"/><circle cx="991.7" cy="255.7" r="4"/><circle cx="1000.4" cy="255.7" r="4"/><circle cx="1009.4" cy="255.7" r="4"/><circle cx="1018.3" cy="255.7" r="4"/><circle cx="1034.2" cy="255.7" r="4"/><circle cx="1043.8" cy="255.7" r="4"/><circle cx="1051.7" cy="255.7" r="4"/><circle cx="1060.0" cy="255.7" r="4"/><circle cx="1068.5" cy="255.7" r="4"/><circle cx="1079.2" cy="255.7" r="4"/><circle cx="1099.6" cy="255.7" r="4"/><circle cx="1109.2" cy="255.7" r="4"/><circle cx="1129.2" cy="255.7" r="4"/><circle cx="1139.6" cy="255.7" r="4"/><circle cx="1147.5" cy="255.7" r="4"/><circle cx="1156.2" cy="255.7" r="4"/><circle cx="1165.4" cy="255.7" r="4"/><circle cx="1174.6" cy="255.7" r="4"/><circle cx="1181.2" cy="255.7" r="4"/><circle cx="1189.2" cy="255.7" r="4"/><circle cx="1195.8" cy="255.7" r="4"/><circle cx="1210.4" cy="255.7" r="4"/><circle cx="1229.2" cy="255.7" r="4"/><circle cx="1239.2" cy="255.7" r="4"/><circle cx="1241.0" cy="255.7" r="4"/><circle cx="1253.5" cy="255.7" r="4"/><circle cx="1260.2" cy="255.7" r="4"/><circle cx="1267.7" cy="255.7" r="4"/><circle cx="1275.4" cy="255.7" r="4"/><circle cx="1283.3" cy="255.7" r="4"/><circle cx="1290.6" cy="255.7" r="4"/><circle cx="1300.4" cy="255.7" r="4"/><circle cx="1307.9" cy="255.7" r="4"/><circle cx="1317.5" cy="255.7" r="4"/><circle cx="1326.9" cy="255.7" r="4"/><circle cx="1333.8" cy="255.7" r="4"/><circle cx="1342.1" cy="255.7" r="4"/><circle cx="1350.4" cy="255.7" r="4"/><circle cx="1359.2" cy="255.7" r="4"/><circle cx="1367.5" cy="255.7" r="4"/><circle cx="1376.5" cy="255.7" r="4"/><circle cx="1385.4" cy="255.7" r="4"/><circle cx="1393.1" cy="255.7" r="4"/><circle cx="1403.5" cy="255.7" r="4"/><circle cx="1411.2" cy="255.7" r="4"/><circle cx="1419.6" cy="255.7" r="4"/><circle cx="1426.9" cy="255.7" r="4"/><circle cx="1435.8" cy="255.7" r="4"/><circle cx="1442.7" cy="255.7" r="4"/><circle cx="1451.0" cy="255.7" r="4"/><circle cx="1458.8" cy="255.7" r="4"/><circle cx="1469.2" cy="255.7" r="4"/><circle cx="1487.3" cy="255.7" r="4"/><circle cx="1495.6" cy="255.7" r="4"/><circle cx="1504.0" cy="255.7" r="4"/><circle cx="1511.9" cy="255.7" r="4"/><circle cx="1520.6" cy="255.7" r="4"/><circle cx="1528.5" cy="255.7" r="4"/><circle cx="1538.3" cy="255.7" r="4"/><circle cx="1546.7" cy="255.7" r="4"/><circle cx="1558.1" cy="255.7" r="4"/><circle cx="1569.2" cy="255.7" r="4"/><circle cx="1590.0" cy="255.7" r="4"/><circle cx="1598.3" cy="255.7" r="4"/><circle cx="1606.7" cy="255.7" r="4"/><circle cx="1616.0" cy="255.7" r="4"/><circle cx="1624.0" cy="255.7" r="4"/>
</g>
</g>
<g fill="#444" font-size="16" text-anchor="end">
<text x="839.8" y="766">0</text>
<text x="839.8" y="703">1</text>
<text x="839.8" y="640">2</text>
<text x="839.8" y="577">3</text>
<text x="839.8" y="514">4</text>
<text x="839.8" y="450">5</text>
<text x="839.8" y="387">6</text>
<text x="839.8" y="324">7</text>
<text x="839.8" y="261">8</text>
</g>
<g fill="#444" font-size="16" text-anchor="middle">
<text x="856.8" y="784.8">0</text>
<text x="944.5" y="784.8">250</text>
<text x="1032.2" y="784.8">500</text>
<text x="1120.0" y="784.8">750</text>
<text x="1207.7" y="784.8">1,000</text>
<text x="1295.4" y="784.8">1,250</text>
<text x="1383.1" y="784.8">1,500</text>
<text x="1470.8" y="784.8">1,750</text>
<text x="1558.6" y="784.8">2,000</text>
</g>
<g font-size="16" fill="#222">
<rect x="1650" y="261" width="32" height="4" fill="#3a67c9"/><text x="1688" y="268.8">1</text>
<rect x="1650" y="287" width="32" height="4" fill="#d7381b"/><text x="1688" y="294.8">2</text>
<rect x="1650" y="313" width="32" height="4" fill="#fb992a"/><text x="1688" y="320.8">3</text>
<rect x="1650" y="339" width="32" height="4" fill="#229628"/><text x="1688" y="346.8">4</text>
<rect x="1650" y="365" width="32" height="4" fill="#970098"/><text x="1688" y="372.8">5</text>
<rect x="1650" y="391" width="32" height="4" fill="#259bc7"/><text x="1688" y="398.8">6</text>
<rect x="1650" y="417" width="32" height="4" fill="#da4677"/><text x="1688" y="424.8">7</text>
<rect x="1650" y="443" width="32" height="4" fill="#67a922"/><text x="1688" y="450.8">8</text>
</g>
</svg>
<svg class="ab" style="left:30px;top:912px" width="72" height="34" viewBox="30 912 72 34" fill="none" stroke="#6394d0" stroke-width="1.9" stroke-linejoin="round" stroke-linecap="round">
<rect x="34" y="917.1" width="8.2" height="23.8" rx="2.6"/>
<path d="M42.2 918.4H56.2a1.8 1.8 0 0 1 1.8 1.8V937.8a1.8 1.8 0 0 1-1.8 1.8H42.2"/>
<path d="M46 923H54.4"/>
<g stroke="none" fill="#6394d0">
<rect x="45.4" y="925.8" width="2" height="2" rx=".5"/><rect x="49.2" y="925.8" width="2" height="2" rx=".5"/><rect x="53" y="925.8" width="2" height="2" rx=".5"/>
<rect x="45.4" y="929.9" width="2" height="2" rx=".5"/><rect x="49.2" y="929.9" width="2" height="2" rx=".5"/><rect x="53" y="929.9" width="2" height="2" rx=".5"/>
<rect x="45.4" y="934.1" width="2" height="2" rx=".5"/><rect x="49.2" y="934.1" width="2" height="2" rx=".5"/><rect x="53" y="934.1" width="2" height="2" rx=".5"/>
</g>
<rect x="66.2" y="919.8" width="29.8" height="19" rx="1.6"/>
<path d="M66.8 920.4L79.6 932.2Q81.1 933.5 82.6 932.2L95.4 920.4"/>
<path d="M67.2 938.4L77.6 930.6M95 938.4L84.6 930.6"/>
</svg>
<div class="ab" style="left:185px;top:892px;width:83px;height:31px;border:2px solid #8fb6e6;border-radius:16px;background:#fff"></div>
<div class="ab" style="left:272px;top:892px;width:77px;height:31px;border-radius:16px;background:#4a7ab5"></div>
<div class="tx" id="n1" style="left:63.59px;top:6.63px;font-size:12.6px;line-height:16px;color:#fff;letter-spacing:-0.461px;">СІВОЗМІНА</div>
<div class="tx" id="n2" style="left:149.20px;top:6.63px;font-size:12.6px;line-height:16px;color:#fff;letter-spacing:-0.768px;">ТЕХНОЛОГІЯ</div>
<div class="tx" id="n3" style="left:242.88px;top:6.63px;font-size:12.6px;line-height:16px;color:#fff;letter-spacing:-0.414px;">ДОКУМЕНТИ</div>
<div class="tx" id="n4" style="left:337.18px;top:6.63px;font-size:12.6px;line-height:16px;color:#fff;letter-spacing:-0.644px;">GPS МОНИТОРИНГ</div>
<div class="tx" id="n5" style="left:467.07px;top:6.63px;font-size:12.6px;line-height:16px;color:#fff;letter-spacing:-0.512px;">КАДАСТР</div>
<div class="tx" id="n6" style="left:1544.07px;top:6.63px;font-size:12.6px;line-height:16px;color:#fff;letter-spacing:-0.352px;">РОСЛИННИЦТВО</div>
<div class="tx" id="n7" style="left:1709.14px;top:6.11px;font-size:14.1px;line-height:16px;color:#fff;letter-spacing:0.042px;">4 561.00</div>
<div class="tx" id="n8" style="left:1784.08px;top:6.63px;font-size:12.6px;line-height:16px;color:#fff;letter-spacing:-0.290px;">ПАВЕЛ КЛИМОВ</div>
<div class="tx" id="l1" style="left:184.41px;top:65.15px;font-size:14px;line-height:16px;color:#424242;letter-spacing:-0.078px;">Номер Поля \ Ділянки</div>
<div class="tx" id="l2" style="left:185.29px;top:129.15px;font-size:14px;line-height:16px;color:#424242;letter-spacing:-0.158px;">Технологічна карта</div>
<div class="tx" id="l3" style="left:185.29px;top:193.15px;font-size:14px;line-height:16px;color:#424242;letter-spacing:-0.076px;">Технологічна операція</div>
<div class="tx" id="l4" style="left:184.41px;top:257.15px;font-size:14px;line-height:16px;color:#424242;letter-spacing:-0.229px;">Культура</div>
<div class="tx" id="l5" style="left:184.55px;top:321.15px;font-size:14px;line-height:16px;color:#424242;letter-spacing:-0.291px;-webkit-text-stroke:0.32px;">№ Документа</div>
<div class="tx" id="l6" style="left:184.41px;top:376.15px;font-size:14px;line-height:16px;color:#424242;letter-spacing:-0.126px;">Енерго машина</div>
<div class="tx" id="l7" style="left:184.70px;top:439.95px;font-size:14px;line-height:16px;color:#424242;letter-spacing:-0.155px;">Сільгосп-машина</div>
<div class="tx" id="l8" style="left:184.42px;top:504.35px;font-size:14px;line-height:16px;color:#424242;letter-spacing:-0.027px;">Площа обробки</div>
<div class="tx" id="l9" style="left:184.42px;top:558.55px;font-size:14px;line-height:16px;color:#424242;letter-spacing:-0.186px;">П.І.Б. працівника</div>
<div class="tx" id="t1" style="left:630.32px;top:86.49px;font-size:13.6px;line-height:16px;color:#4a7ab5;letter-spacing:0.085px;-webkit-text-stroke:0;">Мапа</div>
<div class="tx" id="t2a" style="left:718.67px;top:77.49px;font-size:13.6px;line-height:16px;color:#4a7ab5;letter-spacing:0.103px;-webkit-text-stroke:0;">Результати</div>
<div class="tx" id="t2b" style="left:733.85px;top:95.09px;font-size:13.6px;line-height:16px;color:#4a7ab5;letter-spacing:0.178px;-webkit-text-stroke:0;">посіву</div>
<div class="tx" id="t3a" style="left:866.32px;top:77.49px;font-size:13.6px;line-height:16px;color:#4a7ab5;letter-spacing:0.060px;-webkit-text-stroke:0;">Гістограма розподілу</div>
<div class="tx" id="t3b" style="left:909.36px;top:95.09px;font-size:13.6px;line-height:16px;color:#4a7ab5;letter-spacing:0.250px;-webkit-text-stroke:0;">насіння</div>
<div class="tx" id="t4a" style="left:1083.88px;top:77.49px;font-size:13.6px;line-height:16px;color:#4a7ab5;letter-spacing:0.336px;-webkit-text-stroke:0;">Вибір</div>
<div class="tx" id="t4b" style="left:1076.85px;top:95.09px;font-size:13.6px;line-height:16px;color:#4a7ab5;letter-spacing:0.136px;-webkit-text-stroke:0;">відрізка</div>
<div class="tx" id="t5a" style="left:1203.67px;top:77.49px;font-size:13.6px;line-height:16px;color:#4a7ab5;letter-spacing:0.040px;-webkit-text-stroke:0;">Результати посіву на</div>
<div class="tx" id="t5b" style="left:1244.99px;top:95.09px;font-size:13.6px;line-height:16px;color:#4a7ab5;letter-spacing:0.100px;-webkit-text-stroke:0;">відрізку</div>
<div class="tx" id="t6a" style="left:1416.98px;top:77.49px;font-size:13.6px;line-height:16px;color:#4a7ab5;letter-spacing:0.067px;-webkit-text-stroke:0;">Гістограма розподілу насіння на</div>
<div class="tx" id="t6b" style="left:1494.90px;top:95.09px;font-size:13.6px;line-height:16px;color:#4a7ab5;letter-spacing:0.158px;-webkit-text-stroke:0;">відрізку</div>
<div class="tx" id="t7a" style="left:1703.36px;top:77.49px;font-size:13.6px;line-height:16px;color:#555;letter-spacing:0.098px;-webkit-text-stroke:0;">Розподіл насіння на</div>
<div class="tx" id="t7b" style="left:1742.50px;top:95.09px;font-size:13.6px;line-height:16px;color:#555;letter-spacing:0.112px;-webkit-text-stroke:0;">відрізку</div>
<div class="tx" id="i1" style="left:615.03px;top:153.50px;font-size:13px;line-height:16px;color:#555;letter-spacing:0.102px;">Час:</div>
<div class="tx" id="i1v" style="left:643.16px;top:153.50px;font-size:13px;line-height:16px;color:#222;letter-spacing:0.202px;">00:00:00 - 00:00:00 31/05/2018</div>
<div class="tx" id="i2" style="left:850.47px;top:153.50px;font-size:13px;line-height:16px;color:#555;letter-spacing:0.409px;">Швидкість посіву фактична:</div>
<div class="tx" id="i2v" style="left:1030.74px;top:153.50px;font-size:13px;line-height:16px;color:#222;letter-spacing:0.325px;">7.05 км/г</div>
<div class="tx" id="i3" style="left:1106.44px;top:153.50px;font-size:13px;line-height:16px;color:#555;letter-spacing:0.424px;">Довжина відрізку:</div>
<div class="tx" id="i3v" style="left:1223.58px;top:153.50px;font-size:13px;line-height:16px;color:#222;letter-spacing:0.055px;">40.19 м</div>
<div class="tx" id="b1" style="left:625.33px;top:190.15px;font-size:14px;line-height:16px;color:#4a7ab5;letter-spacing:0.001px;-webkit-text-stroke:0;">Попередній відрізок</div>
<div class="tx" id="b2" style="left:785.94px;top:190.15px;font-size:14px;line-height:16px;color:#4a7ab5;letter-spacing:-0.032px;-webkit-text-stroke:0;">Наступний відрізок</div>
<div class="tx" id="s1" style="left:32.57px;top:855.88px;font-size:14.2px;line-height:16px;color:#4a4f5c;font-weight:700;letter-spacing:0.356px;">ID клієнта</div>
<div class="tx" id="s1v" style="left:110.36px;top:855.88px;font-size:14.2px;line-height:16px;color:#4a7ab5;font-weight:700;">1</div>
<div class="tx" id="s2" style="left:32.57px;top:891.09px;font-size:13.6px;line-height:16px;color:#50545f;letter-spacing:0.039px;">Техпідтримка</div>
<div class="tx" id="f1" style="left:198.63px;top:900.15px;font-size:11.1px;line-height:16px;color:#6e9cd8;font-weight:700;letter-spacing:-0.283px;">ЗБЕРЕГТИ</div>
<div class="tx" id="f2" style="left:285.31px;top:900.15px;font-size:11.1px;line-height:16px;color:#fff;font-weight:700;letter-spacing:0.496px;">ВІДМІНА</div>
</div>
</body>
</html>
